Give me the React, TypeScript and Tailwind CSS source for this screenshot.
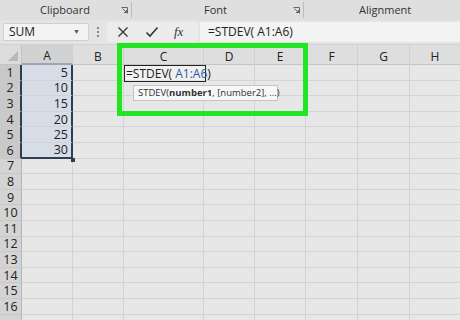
import React from "react";

const cols = [
  { name: "A", w: 51 },
  { name: "B", w: 51 },
  { name: "C", w: 80 },
  { name: "D", w: 51 },
  { name: "E", w: 51 },
  { name: "F", w: 52 },
  { name: "G", w: 52 },
  { name: "H", w: 51 },
];

const values = ["5", "10", "15", "20", "25", "30"];
const rows = Array.from({ length: 16 }, (_, i) => i + 1);

function Launcher() {
  return (
    <svg width="7" height="7" viewBox="0 0 7 7" className="text-[#666]">
      <path d="M0.5 0.5h6v6" fill="none" stroke="currentColor" strokeWidth="1" />
      <path d="M1.5 1.5l4 4M3 5.5h2.5V3" fill="none" stroke="currentColor" strokeWidth="1" />
    </svg>
  );
}

export default function App() {
  return (
    <div
      className="w-[460px] h-[320px] overflow-hidden bg-[#e6e6e6] relative text-[#222]"
      style={{ fontFamily: '"Open Sans", "Noto Sans", sans-serif' }}
    >
      {/* ribbon group labels */}
      <div className="h-[20px] bg-[#dfdfdf] flex items-center text-[11px] text-[#333]">
        <div className="w-[131px] h-full flex items-center relative">
          <span className="ml-[40px]">Clipboard</span>
          <span className="absolute left-[121px] top-[7px]"><Launcher /></span>
        </div>
        <div className="w-px h-[16px] bg-[#bdbdbd]" />
        <div className="w-[171px] h-full flex items-center relative">
          <span className="ml-[72px]">Font</span>
          <span className="absolute left-[161px] top-[7px]"><Launcher /></span>
        </div>
        <div className="w-px h-[16px] bg-[#bdbdbd]" />
        <div className="flex-1 h-full flex items-center">
          <span className="ml-[55px]">Alignment</span>
        </div>
      </div>

      {/* formula bar */}
      <div className="h-[25px] flex items-center bg-[#e4e4e4] border-b border-[#d2d2d2]">
        <div className="ml-[3px] w-[86px] h-[18px] bg-[#f3f3f3] border border-[#d0d0d0] flex items-center justify-between px-[5px] text-[12px]">
          <span>SUM</span>
          <span className="text-[7px] text-[#555] mr-[3px]">▼</span>
        </div>
        <div className="w-[18px] flex flex-col items-center gap-[2px]">
          <span className="w-[2px] h-[2px] bg-[#888]" />
          <span className="w-[2px] h-[2px] bg-[#888]" />
          <span className="w-[2px] h-[2px] bg-[#888]" />
        </div>
        <div className="w-[91px] h-[20px] bg-[#ececec] flex items-center">
          <svg width="12" height="12" viewBox="0 0 12 12" className="ml-[10px]">
            <path d="M1.5 1.5l9 9M10.5 1.5l-9 9" stroke="#333" strokeWidth="1.3" />
          </svg>
          <svg width="14" height="12" viewBox="0 0 14 12" className="ml-[16px]">
            <path d="M1.5 6.5l3.5 3.5 7.5-8.5" fill="none" stroke="#333" strokeWidth="1.6" />
          </svg>
          <span
            className="ml-[15px] text-[13px] italic text-[#333]"
            style={{ fontFamily: '"Liberation Serif", serif' }}
          >
            fx
          </span>
        </div>
        <div className="ml-[2px] flex-1 h-[20px] bg-[#f3f3f3] flex items-center pl-[8px] text-[12px]">
          =STDEV( A1:A6)
        </div>
      </div>

      {/* grid */}
      <div
        className="grid"
        style={{ gridTemplateColumns: `22px ${cols.map((c) => c.w + "px").join(" ")}` }}
      >
        <div className="h-[20px] bg-[#dcdcdc] border-r border-b border-[#c4c4c4] relative">
          <svg width="10" height="10" viewBox="0 0 10 10" className="absolute right-[3px] bottom-[3px]">
            <path d="M10 0V10H0Z" fill="#b8b8b8" />
          </svg>
        </div>
        {cols.map((c) => (
          <div
            key={c.name}
            className={`h-[20px] flex items-center justify-center pt-[4px] text-[12px] border-r border-[#cfcfcf] ${
              c.name === "A" ? "bg-[#d2d2d2] border-b-2 border-b-[#9aa6b4]" : "bg-[#dedede] border-b border-b-[#c4c4c4]"
            }`}
          >
            {c.name}
          </div>
        ))}
        {rows.map((r) => (
          <React.Fragment key={r}>
            <div
              className={`h-[15.6px] flex items-center justify-center text-[12.5px] leading-[13px] border-b border-[#c8c8c8] ${
                r <= 6 ? "bg-[#c9c9c9] border-r-2 border-r-[#2c3e55]" : "bg-[#d4d4d4] border-r border-r-[#b5b5b5]"
              }`}
            >
              {r}
            </div>
            {cols.map((c, ci) => {
              const inSel = ci === 0 && r <= 6;
              return (
                <div
                  key={c.name}
                  className={`h-[15.6px] border-r border-b border-[#d3d3d3] flex items-center justify-end pr-[3px] text-[12.5px] leading-[13px] ${
                    inSel ? "bg-[#d6dde6] border-r-2 border-r-[#2c3e55]" : "bg-[#e7e7e7]"
                  } ${ci === 0 && r === 6 ? "border-b-2 border-b-[#2c3e55]" : ""}`}
                >
                  {inSel ? values[r - 1] : ""}
                </div>
              );
            })}
          </React.Fragment>
        ))}
        <div className="h-[8px] bg-[#d4d4d4] border-r border-[#b5b5b5] overflow-hidden" />
        {cols.map((c) => (
          <div key={c.name} className="h-[8px] bg-[#e7e7e7] border-r border-[#d3d3d3]" />
        ))}
      </div>

      {/* fill handle */}
      <div className="absolute left-[71px] top-[158px] w-[4px] h-[4px] bg-[#2c3e55]" />

      {/* editing cell C1 */}
      <div className="absolute left-[124px] top-[65px] w-[82px] h-[17px] border border-[#222] bg-white/40 flex items-center pl-[1px] text-[12px] whitespace-nowrap">
        <span>=STDEV(</span>
        <span className="text-[#2b5aa8]">&nbsp;A1:A6</span>
        <span>)</span>
      </div>

      {/* argument tooltip */}
      <div className="absolute left-[133px] top-[85px] w-[145px] h-[16px] bg-[#f7f7f7] border border-[#c4c4c4] flex items-center pl-[4px] text-[9.5px] text-[#333] whitespace-nowrap">
        STDEV(<b>number1</b>, [number2], ...)
      </div>

      {/* green highlight */}
      <div className="absolute left-[117px] top-[43px] w-[191px] h-[73px] border-[5px] border-[#22e622]" />
    </div>
  );
}
